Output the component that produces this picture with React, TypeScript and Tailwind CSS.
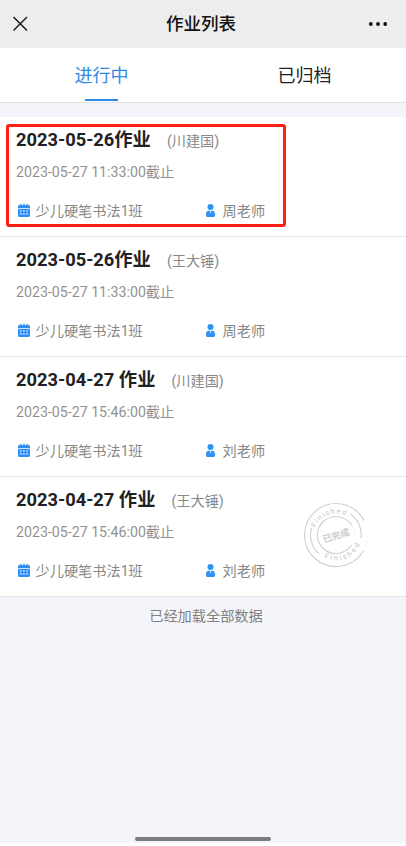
import React from "react";

type Homework = {
  title: string;
  student: string;
  deadline: string;
  teacher: string;
  finished?: boolean;
};

const homeworks: Homework[] = [
  { title: "2023-05-26作业", student: "(川建国)", deadline: "2023-05-27 11:33:00截止", teacher: "周老师" },
  { title: "2023-05-26作业", student: "(王大锤)", deadline: "2023-05-27 11:33:00截止", teacher: "周老师" },
  { title: "2023-04-27 作业", student: "(川建国)", deadline: "2023-05-27 15:46:00截止", teacher: "刘老师" },
  { title: "2023-04-27 作业", student: "(王大锤)", deadline: "2023-05-27 15:46:00截止", teacher: "刘老师", finished: true },
];

function CalendarIcon() {
  return (
    <svg width="12" height="13" viewBox="0 0 12 13" className="mb-0.5 shrink-0">
      <path
        fill="#2e90f5"
        d="M2 0h1.500v1.300h1.750V0h1.500v1.300h1.750V0H10v1.300h.8c.7 0 1.200.4 1.200 1V4H0V2.300c0-.6.5-1 1.200-1H2zM0 4.800h12v7c0 .7-.5 1.200-1.200 1.200H1.200C.5 13 0 12.500 0 11.800z"
      />
      <path
        fill="#fff"
        d="M2 6.300h1.500v1.300H2zM5.200 6.300h1.500v1.300H5.200zM8.400 6.300h1.500v1.300H8.400zM2 9.300h1.500v1.300H2zM5.200 9.300h1.500v1.300H5.200zM8.400 9.300h1.500v1.300H8.400z"
      />
    </svg>
  );
}

function TeacherIcon() {
  return (
    <svg width="9" height="13" viewBox="0 0 9 13" className="mb-0.5 shrink-0">
      <circle cx="4.500" cy="3" r="3" fill="#2e90f5" />
      <path
        fill="#2e90f5"
        d="M2.300 6.500C3.500 7.500 5.500 7.500 6.700 6.500C8.200 7.200 9 8.800 9 10.400V11.200C9 12.400 8.300 13 7.300 13H1.700C.7 13 0 12.400 0 11.200V10.400C0 8.800.8 7.200 2.300 6.500Z"
      />
      <path fill="#fff" fillOpacity=".7" d="m4.500 7.500.9 1-.9 1-.9-1z" />
    </svg>
  );
}

function FinishedStamp() {
  return (
    <svg width="66" height="66" viewBox="-33 -33 66 66" fill="none" stroke="#cfcfcf" strokeWidth="1.100">
      <defs>
        <path id="stampTop" d="M-21.500 0A21.500 21.500 0 0 1 21.500 0" />
        <path id="stampBottom" d="M-25.500 0A25.500 25.500 0 0 0 25.500 0" />
      </defs>
      <path d="M28-14.500A31.500 31.500 0 1 0 27.500 15.500" />
      <path d="M29.500 12A31.500 31.500 0 0 0 31 5" strokeOpacity=".3" />
      <path d="M-24.500-7A25.500 25.500 0 0 0-17.500 18.500M14.500-21A25.500 25.500 0 0 1 25 3" />
      <path d="M15.500-10A18.500 18.500 0 1 0 15.500 10" />
      <path d="M15.500-10A18.500 18.500 0 0 1 18.500 0" strokeOpacity=".3" />
      <g className="font-['Roboto','Noto_Sans_CJK_SC',sans-serif]" fill="#c6c6c6" stroke="none">
        <text fontSize="7.300" letterSpacing="1.200" transform="rotate(-21)">
          <textPath href="#stampTop" startOffset="50%" textAnchor="middle">Finished</textPath>
        </text>
        <text fontSize="7.300" letterSpacing="2.200" transform="rotate(-23)">
          <textPath href="#stampBottom" startOffset="50%" textAnchor="middle">Finished</textPath>
        </text>
        <text fontSize="9.200" fontWeight="700" fill="#cccccc" textAnchor="middle" y="4" transform="rotate(-17)">已完成</text>
      </g>
    </svg>
  );
}

function HomeworkItem({ item }: { item: Homework }) {
  return (
    <li className="relative h-[120px] border-b border-[#e6e6e6] bg-white px-4">
      <div className="flex h-[46px] items-center gap-4 whitespace-nowrap">
        <h2 className="text-[18.300px] font-bold leading-[28px] text-[#202122]">{item.title}</h2>
        <span className="pt-[3px] text-[14.200px] text-[#888]">{item.student}</span>
      </div>
      <p className="h-[38px] text-[14.200px] leading-[18px] text-[#929292]">{item.deadline}</p>
      <div className="flex h-5 items-center text-[14.200px] leading-5 text-[#888]">
        <div className="flex w-[189.500px] items-center gap-1.5 pl-[1.500px]">
          <CalendarIcon />
          <span>少儿硬笔书法1班</span>
        </div>
        <div className="flex items-center gap-2">
          <TeacherIcon />
          <span>{item.teacher}</span>
        </div>
      </div>
      {item.finished && (
        <div className="absolute left-[303px] top-[25px]">
          <FinishedStamp />
        </div>
      )}
    </li>
  );
}

export default function App() {
  return (
    <div className="h-[846px] w-[406px] overflow-hidden bg-white font-['Roboto','Noto_Sans_CJK_SC',sans-serif]">
      <div className="flex h-[843px] flex-col bg-[#f4f5fa]">
        <header className="grid h-12 shrink-0 grid-cols-3 items-center bg-[#ededed] text-[#111]">
          <svg width="16" height="16" viewBox="0 0 16 16" className="ml-[13px]" stroke="#111" strokeWidth="1.400">
            <path d="M.5 1 14 14.500M14 1 .5 14.500" />
          </svg>
          <h1 className="whitespace-nowrap pr-1 pt-px text-center text-[17.500px] font-medium">作业列表</h1>
          <svg width="20" height="6" viewBox="0 0 20 6" className="mr-[18px] justify-self-end" fill="#111">
            <circle cx="2.800" cy="3" r="1.900" />
            <circle cx="10" cy="3" r="1.900" />
            <circle cx="17.200" cy="3" r="1.900" />
          </svg>
        </header>
        <nav className="grid h-[55px] shrink-0 grid-cols-2 border-b border-[#e2e3e5] bg-white text-[18px] text-[#222]">
          <div className="flex flex-col items-center text-[#2f8ae5]">
            <span className="h-[51px] leading-[56px]">进行中</span>
            <span className="h-0.5 w-[33px] bg-[#2f8ae5]" />
          </div>
          <div className="flex flex-col items-center">
            <span className="leading-[56px]">已归档</span>
          </div>
        </nav>
        <main className="relative pt-[14px]">
          <ul>
            {homeworks.map((item, index) => (
              <HomeworkItem key={index} item={item} />
            ))}
          </ul>
          <div className="absolute left-[6px] top-[21px] h-[103px] w-[280px] rounded-[3px] border-[3px] border-[#ff2015]" />
          <p className="pl-1.5 pt-[9px] text-center text-[14.200px] leading-5 text-[#808080]">已经加载全部数据</p>
        </main>
        <div className="mx-auto mb-[2px] mt-auto h-1 w-[136px] rounded-full bg-[#7b7b7d]" />
      </div>
    </div>
  );
}
